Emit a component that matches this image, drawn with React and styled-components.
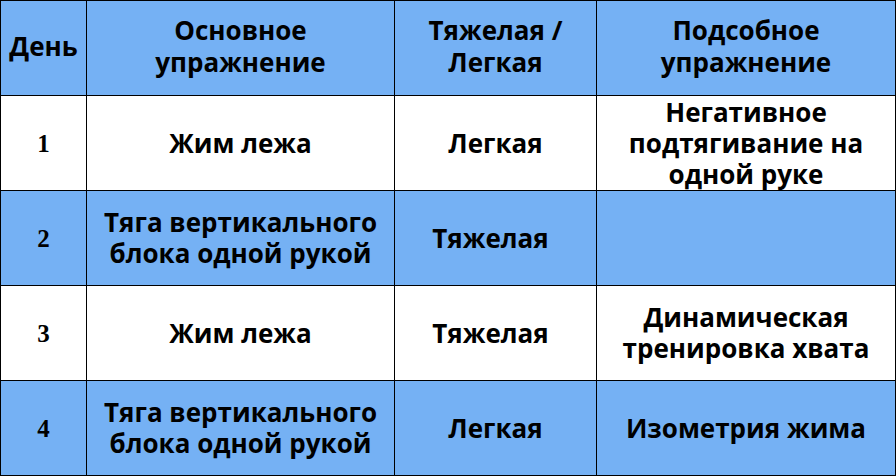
import React from "react"
import styled, { createGlobalStyle } from "styled-components"

const GlobalStyle = createGlobalStyle`
  html, body {
    margin: 0;
    padding: 0;
    background: #ffffff;
  }
`

const Table = styled.table`
  border-collapse: collapse;
  width: 896px;
  table-layout: fixed;
  font-family: "Open Sans", "DejaVu Sans", sans-serif;
  font-weight: 700;
  color: #000;
`

const Row = styled.tr`
  height: 95px;
  background: ${props => props.$blue ? "#75b1f4" : "#ffffff"};
`

const HeadCell = styled.th`
  border: 1px solid #000;
  font-size: 26px;
  line-height: 32px;
  font-weight: 700;
  text-align: center;
  vertical-align: middle;
  padding: 0 2px 4px;
`

const Cell = styled.td`
  border: 1px solid #000;
  font-size: 26px;
  line-height: 31px;
  text-align: center;
  vertical-align: middle;
  padding: 0 ${props => props.$nudge ? "12px" : "2px"} 0 2px;
`

const DayCell = styled(Cell)`
  font-family: "Liberation Serif", "DejaVu Serif", serif;
  font-size: 25px;
`

const rows = [
  { day: "1", main: "Жим лежа", load: "Легкая", extra: "Негативное подтягивание на одной руке" },
  { day: "2", main: "Тяга вертикального блока одной рукой", load: "Тяжелая", extra: "", nudge: true },
  { day: "3", main: "Жим лежа", load: "Тяжелая", extra: "Динамическая тренировка хвата", nudge: true },
  { day: "4", main: "Тяга вертикального блока одной рукой", load: "Легкая", extra: "Изометрия жима" },
]

const App = () => {
  return (
    <>
      <GlobalStyle />
      <Table>
        <colgroup>
          <col style={{ width: 86 }} />
          <col style={{ width: 308 }} />
          <col style={{ width: 202 }} />
          <col />
        </colgroup>
        <thead>
          <Row $blue>
            <HeadCell>День</HeadCell>
            <HeadCell>Основное<br />упражнение</HeadCell>
            <HeadCell>Тяжелая /<br />Легкая</HeadCell>
            <HeadCell>Подсобное<br />упражнение</HeadCell>
          </Row>
        </thead>
        <tbody>
          {rows.map((r, i) => (
            <Row key={r.day} $blue={i % 2 === 1}>
              <DayCell>{r.day}</DayCell>
              <Cell>{r.main}</Cell>
              <Cell $nudge={r.nudge}>{r.load}</Cell>
              <Cell>{r.extra}</Cell>
            </Row>
          ))}
        </tbody>
      </Table>
    </>
  )
}

export default App
